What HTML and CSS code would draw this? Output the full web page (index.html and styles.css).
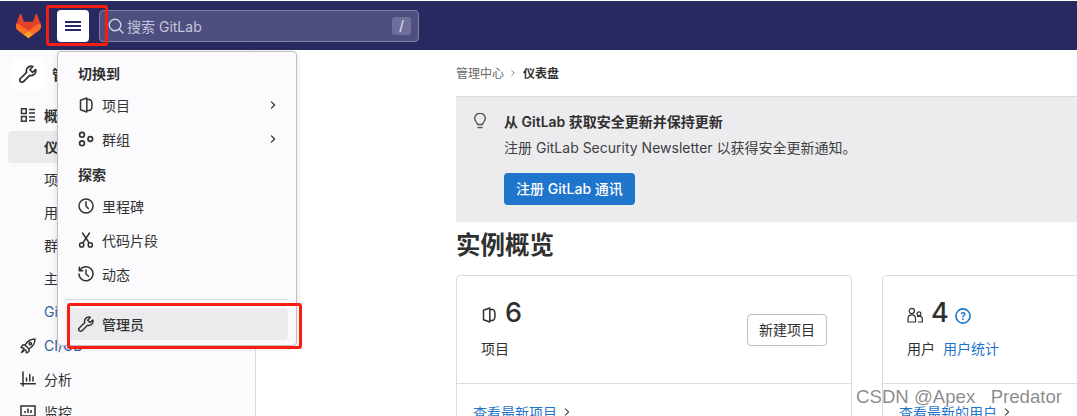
FILE: index.html
```html
<!DOCTYPE html>
<html lang="zh">
<head>
<meta charset="utf-8">
<title>仪表盘 · 管理中心 · GitLab</title>
<link rel="stylesheet" href="styles.css">
</head>
<body>
<svg class="defs" width="0" height="0" aria-hidden="true">
  <symbol id="i-project" viewBox="0 0 16 16"><path fill="none" stroke="currentColor" stroke-width="1.500" stroke-linejoin="round" d="M2.500 3.200 8.800 1v14l-6.300-2.200zM8.800 2.600h2.700c1.400 0 2.500 2.400 2.500 5.400s-1.100 5.400-2.500 5.400H8.800"/></symbol>
  <symbol id="i-group" viewBox="0 0 16 16"><g fill="none" stroke="currentColor" stroke-width="1.700"><circle cx="4" cy="3.700" r="2.400"/><circle cx="4" cy="12.300" r="2.400"/><circle cx="12.300" cy="8" r="2.300"/></g></symbol>
  <symbol id="i-clock" viewBox="0 0 16 16"><g fill="none" stroke="currentColor" stroke-width="1.500" stroke-linecap="round"><circle cx="8" cy="8" r="7"/><path d="M8 3.800V8l2.300 2.500"/></g></symbol>
  <symbol id="i-snippet" viewBox="0 0 16 16"><g fill="none" stroke="currentColor" stroke-width="1.500" stroke-linecap="round"><circle cx="3.700" cy="12.900" r="2.100"/><circle cx="12.300" cy="12.900" r="2.100"/><path d="M4.800 11 11.500 1M11.200 11 4.500 1"/></g></symbol>
  <symbol id="i-history" viewBox="0 0 16 16"><g fill="none" stroke="currentColor" stroke-width="1.500" stroke-linecap="round" stroke-linejoin="round"><path d="M1.800 4.500A7 7 0 1 1 1 8"/><path d="M1.300 1.300v3.500h3.500M8 4v4l2.500 2.300"/></g></symbol>
  <symbol id="i-admin" viewBox="0 0 16 16"><path fill="none" stroke="currentColor" stroke-width="1.500" stroke-linejoin="round" d="M10.800 1a4.200 4.200 0 0 0-4 5.500L1.300 12a1.900 1.900 0 0 0 2.700 2.700l5.500-5.500A4.200 4.200 0 0 0 14.800 4L12 6.500 9.700 4.200 12.300 1.300A4 4 0 0 0 10.800 1z"/></symbol>
  <symbol id="i-overview" viewBox="0 0 16 16"><g fill="none" stroke="currentColor" stroke-width="1.500"><rect x="1.500" y="1.800" width="4.700" height="4.700"/><rect x="1.500" y="9.500" width="4.700" height="4.700"/><path d="M9 2.500h6M9 6h6M9 10h6M9 13.500h6"/></g></symbol>
  <symbol id="i-rocket" viewBox="0 0 16 16"><g fill="none" stroke="currentColor" stroke-width="1.400" stroke-linejoin="round" stroke-linecap="round"><path d="M15 1c-4.500 0-7.500 2-10 6l4 4c4-2.500 6-5.500 6-10z"/><circle cx="10.300" cy="5.700" r="1.200"/><path d="M5 7H2.500L1 9.500l3 .7M9 11v2.500L6.500 15l-.7-3M4 11.500C3 12 2.300 13 1.500 14.500 3 13.700 4 13 4.500 12"/></g></symbol>
  <symbol id="i-chart" viewBox="0 0 16 16"><path fill="none" stroke="currentColor" stroke-width="1.500" stroke-linecap="round" d="M3 1v14M.8 12.700h14.500M6.500 10V7M9.800 10V3.500M13 10V6"/></symbol>
  <symbol id="i-monitor" viewBox="0 0 16 16"><g fill="none" stroke="currentColor" stroke-width="1.500"><rect x="1" y="2" width="14" height="10"/><path d="M4.500 12v2.500M11.500 12v2.500M3 14.500h10M5 9V7M8 9V4.500M11 9V6"/></g></symbol>
  <symbol id="i-chevron" viewBox="0 0 16 16"><path fill="none" stroke="currentColor" stroke-width="2" stroke-linecap="round" stroke-linejoin="round" d="m5.500 3 5 5-5 5"/></symbol>
  <symbol id="i-users" viewBox="0 0 16 16"><g fill="none" stroke="currentColor" stroke-width="1.200"><circle cx="4.800" cy="4" r="2.600"/><path d="M1 15v-3.500C1 9 2.500 7.800 4.800 7.800S8.500 9 8.500 11.500V15z"/><circle cx="12" cy="6.800" r="1.900"/><path d="M10.800 15h4.500v-3c0-1.700-1.300-2.800-3.300-2.800-.8 0-1.500.2-2 .5"/></g></symbol>
</svg>

<header class="topbar">
  <svg class="logo" viewBox="0 0 25 24" width="25" height="24" aria-label="GitLab">
    <path fill="#e24329" d="m24.507 9.5-.034-.09L21.082.562a.896.896 0 0 0-1.694.091l-2.29 7.01H7.825L5.535.653a.898.898 0 0 0-1.694-.09L.451 9.411.416 9.5a6.297 6.297 0 0 0 2.090 7.278l.012.01.03.022 5.160 3.867 2.560 1.935 1.554 1.176a1.051 1.051 0 0 0 1.268 0l1.555-1.176 2.560-1.935 5.197-3.890.014-.01A6.297 6.297 0 0 0 24.507 9.5Z"/>
    <path fill="#fc6d26" d="m24.507 9.5-.034-.09a11.440 11.440 0 0 0-4.560 2.051l-7.447 5.632 4.742 3.584 5.197-3.890.014-.01A6.297 6.297 0 0 0 24.507 9.5Z"/>
    <path fill="#fca326" d="m7.707 20.677 2.560 1.935 1.555 1.176a1.051 1.051 0 0 0 1.268 0l1.555-1.176 2.560-1.935-4.743-3.584-4.755 3.584Z"/>
    <path fill="#fc6d26" d="M5.010 11.461a11.430 11.430 0 0 0-4.560-2.050L.416 9.500a6.297 6.297 0 0 0 2.090 7.278l.012.01.03.022 5.160 3.867 4.745-3.584-7.444-5.632Z"/>
  </svg>
  <button class="menu-btn" aria-label="菜单"><span></span><span></span><span></span></button>
  <div class="search">
    <svg class="search-icon" viewBox="0 0 16 16" width="16" height="16"><g fill="none" stroke="currentColor" stroke-width="1.400" stroke-linecap="round"><circle cx="7" cy="7" r="5.800"/><path d="m11.300 11.300 3.700 3.700"/></g></svg>
    <span class="search-text">搜索 GitLab</span>
    <kbd class="search-key">/</kbd>
  </div>
</header>

<div class="layout">
  <aside class="sidebar">
    <div class="side-head"><span class="side-tile"><svg class="ic18"><use href="#i-admin"/></svg></span><span class="side-title">管理中心</span></div>
    <ul class="side-list">
      <li class="side-item side-strong"><svg class="ic16"><use href="#i-overview"/></svg><span>概览</span></li>
      <li class="side-sub side-active">仪表盘</li>
      <li class="side-sub">项目</li>
      <li class="side-sub">用户</li>
      <li class="side-sub">群组</li>
      <li class="side-sub">主题</li>
      <li class="side-sub side-blue">Gitaly 服务器</li>
      <li class="side-item"><svg class="ic16"><use href="#i-rocket"/></svg><span class="side-blue">CI/CD</span></li>
      <li class="side-item"><svg class="ic16"><use href="#i-chart"/></svg><span>分析</span></li>
      <li class="side-item"><svg class="ic16"><use href="#i-monitor"/></svg><span>监控</span></li>
    </ul>
  </aside>

  <main class="content">
    <nav class="crumbs"><span class="crumb-link">管理中心</span><svg class="crumb-sep"><use href="#i-chevron"/></svg><strong class="crumb-now">仪表盘</strong></nav>
    <section class="notice">
      <svg class="notice-icon" viewBox="0 0 16 16" width="16" height="16"><g fill="none" stroke="currentColor" stroke-width="1.400" stroke-linecap="round" stroke-linejoin="round"><path d="M5.500 11.500c0-2-2.800-3-2.800-6A5.300 5.300 0 0 1 13.300 5.500c0 3-2.800 4-2.800 6z"/><path d="M6 14.500h4"/></g></svg>
      <div class="notice-body">
        <h4 class="notice-title">从 GitLab 获取安全更新并保持更新</h4>
        <p class="notice-text">注册 GitLab Security Newsletter 以获得安全更新通知。</p>
        <a class="btn-primary">注册 GitLab 通讯</a>
      </div>
    </section>
    <h1 class="page-title">实例概览</h1>
    <div class="cards">
      <article class="card">
        <div class="card-top">
          <div>
            <div class="stat"><svg class="ic16 stat-icon"><use href="#i-project"/></svg><span class="stat-num">6</span></div>
            <div class="stat-label">项目</div>
          </div>
          <a class="btn-plain">新建项目</a>
        </div>
        <div class="card-foot"><a class="link">查看最新项目</a><svg class="foot-chev"><use href="#i-chevron"/></svg></div>
      </article>
      <article class="card">
        <div class="card-top">
          <div>
            <div class="stat"><svg class="ic16 stat-icon"><use href="#i-users"/></svg><span class="stat-num">4</span>
              <svg class="help" viewBox="0 0 16 16" width="16" height="16"><circle cx="8" cy="8" r="7.100" fill="none" stroke="currentColor" stroke-width="1.600"/><text x="8" y="11.500" class="help-q">?</text></svg>
            </div>
            <div class="stat-label">用户<a class="link stat-link">用户统计</a></div>
          </div>
        </div>
        <div class="card-foot"><a class="link">查看最新的用户</a><svg class="foot-chev"><use href="#i-chevron"/></svg></div>
      </article>
    </div>
  </main>
</div>

<div class="menu">
  <div class="menu-head">切换到</div>
  <div class="menu-item"><svg class="ic16"><use href="#i-project"/></svg><span>项目</span><svg class="menu-chev"><use href="#i-chevron"/></svg></div>
  <div class="menu-item"><svg class="ic16"><use href="#i-group"/></svg><span>群组</span><svg class="menu-chev"><use href="#i-chevron"/></svg></div>
  <div class="menu-head menu-head-2">探索</div>
  <div class="menu-item"><svg class="ic16"><use href="#i-clock"/></svg><span>里程碑</span></div>
  <div class="menu-item"><svg class="ic16"><use href="#i-snippet"/></svg><span>代码片段</span></div>
  <div class="menu-item"><svg class="ic16"><use href="#i-history"/></svg><span>动态</span></div>
  <div class="menu-rule"></div>
  <div class="menu-item menu-admin"><svg class="ic16"><use href="#i-admin"/></svg><span>管理员</span></div>
</div>

<div class="mark mark-btn"></div>
<div class="mark mark-admin"></div>
<div class="watermark">CSDN @Apex&nbsp;&nbsp;&nbsp;Predator</div>
</body>
</html>
```
FILE: styles.css
```css
* { box-sizing: border-box; }
html, body { margin: 0; height: 416px; overflow: hidden; }
body {
  position: relative;
  background: #fff;
  color: #303030;
  font-family: Inter, "Noto Sans CJK SC", sans-serif;
  font-size: 14px;
  padding-top: 1px;
}
.defs { position: absolute; }
svg { display: block; flex: none; }
.ic16 { width: 16px; height: 16px; }
.ic18 { width: 18px; height: 18px; }

.topbar {
  height: 49px;
  background: #292961;
  display: flex;
  align-items: center;
  padding: 0 0 0 16px;
}
.menu-btn {
  width: 32px; height: 32px;
  margin-left: 16px;
  border: 0; border-radius: 4px;
  background: #fff;
  display: flex; flex-direction: column; align-items: center; justify-content: center; gap: 2px;
  padding: 0;
}
.menu-btn span { width: 16px; height: 2px; background: #292961; }
.search {
  width: 320px; height: 32px;
  margin-left: 10px;
  background: #4f4f7f;
  border: 1px solid #8080a8;
  border-radius: 4px;
  display: flex; align-items: center;
  padding: 0 7px 0 8px;
  color: #c4c4de;
}
.search-icon { color: #d0d0e6; }
.search-text { margin-left: 3px; font-size: 14px; }
.search-key {
  margin-left: auto;
  width: 19px; height: 18px;
  background: #6f6f9b;
  border-radius: 3px;
  color: #e6e6f2;
  font: 14px/18px Inter, sans-serif;
  text-align: center;
}

.layout { display: flex; height: 366px; overflow: hidden; }
.sidebar {
  width: 256px; flex: none;
  background: #fbfafd;
  border-right: 1px solid #dcdcde;
  padding: 8px 8px 0;
  overflow: hidden;
}
.side-head { display: flex; align-items: center; gap: 8px; padding: 0 4px; height: 32px; }
.side-tile { width: 32px; height: 32px; background: #fff; border-radius: 4px; display: flex; align-items: center; justify-content: center; }
.side-title { font-weight: 600; }
.side-list { list-style: none; margin: 9px 0 0; padding: 0; }
.side-item { display: flex; align-items: center; gap: 8px; height: 33px; padding-left: 12px; }
.side-strong { height: 32px; font-weight: 600; }
.side-sub { height: 32px; margin-bottom: 1px; line-height: 32px; padding-left: 36px; }
.side-active { background: #ebebed; border-radius: 4px; font-weight: 600; }
.side-blue { color: #33649c; }

.content { flex: 1; min-width: 0; padding-left: 200px; overflow: hidden; }
.crumbs { display: flex; align-items: center; height: 46px; font-size: 12px; padding-bottom: 1px; }
.crumb-link { color: #666; }
.crumb-sep { width: 8px; height: 8px; margin: 0 6px 0 5px; color: #888; }
.crumb-now { font-weight: 600; }
.notice {
  background: #ececef;
  border-top: 1px solid #dcdcde;
  display: flex;
  padding: 15px 16px 0;
  height: 126px;
}
.notice-icon { color: #555; margin-top: 1px; }
.notice-body { margin-left: 16px; }
.notice-title { margin: 0; font-size: 14px; font-weight: 600; line-height: 20px; }
.notice-text { margin: 6px 0 0; line-height: 20px; color: #404040; }
.btn-primary {
  display: block; margin-top: 15px;
  width: 131px; height: 32px; line-height: 32px;
  text-align: center;
  background: #1f75cb; color: #fff; border-radius: 4px; font-weight: 500;
}
.page-title { margin: 7px 0 14px; font-size: 24.500px; line-height: 32px; font-weight: 700; }
.cards { display: flex; gap: 30px; }
.card {
  width: 396px; flex: none; height: 170px;
  border: 1px solid #dcdcde; border-radius: 4px;
}
.card-top {
  height: 108px; border-bottom: 1px solid #dcdcde;
  padding: 23px 24px 0 24px;
  display: flex; justify-content: space-between; align-items: flex-start;
}
.stat { display: flex; align-items: center; gap: 8px; height: 28px; }
.stat-icon { margin-top: 4px; }
.stat-num { font-size: 27px; font-weight: 500; line-height: 28px; }
.stat-label { margin-top: 12px; font-size: 14px; line-height: 20px; }
.stat-link { margin-left: 8px; }
.help { color: #1f75cb; margin: 6px 0 0 -2px; }
.help-q { font: 700 10px Inter, sans-serif; fill: currentColor; text-anchor: middle; }
.btn-plain {
  display: block; margin-top: 15px;
  height: 32px; line-height: 30px; padding: 0 11px;
  border: 1px solid #bfbfc3; border-radius: 4px; font-size: 14px;
}
.card-foot { display: flex; align-items: center; padding: 18px 0 0 16px; gap: 4px; }
.link { color: #1f75cb; font-size: 14px; }
.foot-chev { width: 10px; height: 10px; margin-left: 1px; color: #555; }

.menu {
  position: absolute; left: 57px; top: 51px;
  width: 240px; height: 295px;
  background: #fbfafd;
  border: 1px solid #bfbfc3;
  border-radius: 4px;
  box-shadow: 0 2px 6px rgba(0,0,0,.12);
  padding: 6px 8px 0;
}
.menu-head { height: 30px; line-height: 32px; font-weight: 600; font-size: 14px; padding-left: 12px; }
.menu-head-2 { height: 33px; line-height: 37px; }
.menu-item { display: flex; align-items: center; gap: 8px; height: 34px; padding: 0 10px 0 12px; color: #333; font-size: 14px; }
.menu-chev { width: 10px; height: 10px; margin-left: auto; color: #333; }
.menu-rule { border-top: 1px solid #dcdcde; margin: 8px 0 0; height: 9px; }
.menu-admin { background: #ebebed; border-radius: 4px; height: 32px; font-weight: 500; }

.mark { position: absolute; border: 3px solid #f81d11; border-radius: 3px; }
.mark-btn { left: 46px; top: 5px; width: 62px; height: 41px; }
.mark-admin { left: 67px; top: 303px; width: 235px; height: 46px; }
.watermark {
  position: absolute; right: 15px; top: 386px;
  color: rgba(60,60,60,.6);
  font: 18.600px "Liberation Sans", sans-serif;
}
```
